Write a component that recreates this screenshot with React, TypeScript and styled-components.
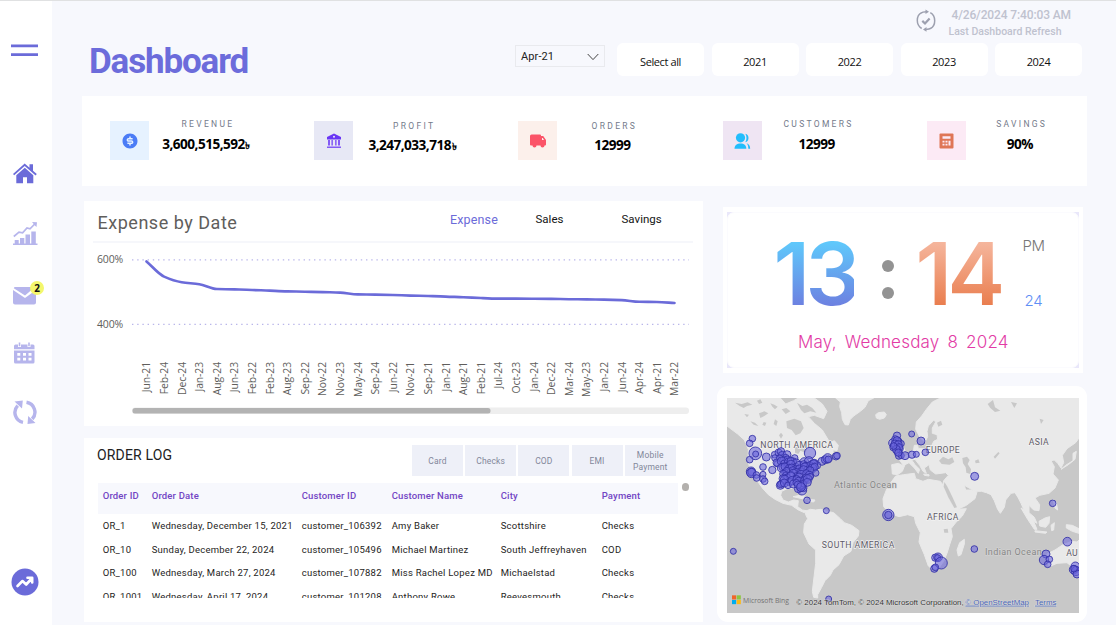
import React from "react";
import styled, { createGlobalStyle, css } from "styled-components";
import { RiMoneyDollarCircleFill } from "react-icons/ri";

const din = '"Roboto", "Liberation Sans", sans-serif';
const segoe = '"Open Sans", "Noto Sans", sans-serif';
const accent = "#6b6bd9";
const soft = "#b6b5ec";

const GlobalStyle = createGlobalStyle`
  *, *::before, *::after { box-sizing: border-box; }
  body { margin: 0; background: #f7f8fd; overflow: hidden; font-family: ${din}; }
  svg { display: block; }
`;

const Page = styled.div`
  display: flex;
  width: 1116px;
  height: 625px;
  overflow: hidden;
  background: #f7f8fd;
  border-top: 1px solid #e0e1e2;
`;

/* ---------- sidebar ---------- */
const Sidebar = styled.nav`
  width: 52px;
  flex: none;
  background: #fff;
  display: flex;
  flex-direction: column;
`;

const NavItem = styled.div<{ $gap: number; $left?: number }>`
  position: relative;
  margin-top: ${(p) => p.$gap}px;
  margin-left: ${(p) => p.$left ?? 13}px;
  width: max-content;
`;

const Badge = styled.span`
  position: absolute;
  left: 17px;
  top: -5px;
  width: 14px;
  height: 14px;
  border-radius: 50%;
  background: #f4f76c;
  font: 700 10px/15px ${segoe};
  color: #111;
  text-align: center;
`;

/* ---------- header ---------- */
const Main = styled.main`
  flex: 1;
  min-width: 0;
  padding-left: 30px;
`;

const Header = styled.header`
  height: 95px;
  width: 1005px;
  display: flex;
  justify-content: space-between;
`;

const Title = styled.h1`
  margin: 39px 0 0 7px;
  font: 700 35px/44px ${din};
  letter-spacing: -1.15px;
  color: #6c6cdb;
`;

const HeaderRight = styled.div`
  display: flex;
  flex-direction: column;
  padding-right: 5px;
`;

const Refresh = styled.div`
  display: flex;
  height: 42px;
  align-self: flex-end;
  padding: 6px 11px 0 0;
`;

const RefreshText = styled.div`
  margin-left: 12px;
  color: #bfc2cf;
  white-space: nowrap;
`;

const RefreshDate = styled.div`
  padding-left: 3px;
  font: 500 12px/17px ${din};
  letter-spacing: -0.12px;
`;

const RefreshNote = styled.div`
  font: 500 10.5px/16px ${din};
  letter-spacing: 0.02px;
`;

const Filters = styled.div`
  display: flex;
  gap: 7.5px;
`;

const Slicer = styled.div`
  width: 90px;
  height: 22px;
  margin: 2px 4.5px 0 0;
  padding: 1px 5px 0;
  border: 1px solid #e9eaee;
  display: flex;
  align-items: center;
  justify-content: space-between;
  font: 400 11px/20px ${din};
  letter-spacing: 0.1px;
  color: #222;
`;

const YearButton = styled.button`
  width: 87px;
  height: 33px;
  border: 0;
  border-radius: 6px;
  background: #fff;
  padding: 5px 0 0;
  font: 400 11px/16px ${segoe};
  letter-spacing: -0.4px;
  color: #111;
`;

/* ---------- KPI strip ---------- */
const KpiBar = styled.section`
  width: 1005px;
  height: 90px;
  padding: 25px 0 0 28px;
  background: #fff;
  display: flex;
`;

const Kpi = styled.div`
  width: 204.2px;
  flex: none;
  display: flex;
`;

const KpiIcon = styled.div<{ $bg: string }>`
  width: 39px;
  height: 39px;
  flex: none;
  background: ${(p) => p.$bg};
  display: flex;
  align-items: center;
  justify-content: center;
`;

const KpiText = styled.div<{ $dx: number; $dy: number }>`
  width: 120px;
  flex: none;
  margin: ${(p) => -5 + p.$dy}px 0 0 ${(p) => p.$dx - 99}px;
  text-align: center;
`;

const KpiLabel = styled.div`
  font: 400 8.5px/17px ${din};
  letter-spacing: 2.3px;
  padding-left: 4px;
  color: #737a8a;
`;

const KpiValue = styled.div<{ $dy: number }>`
  margin-top: ${(p) => -0.5 - p.$dy}px;
  font: 700 13.6px/22px ${segoe};
  letter-spacing: -0.52px;
  color: #000;
  white-space: nowrap;
  small { font-size: 10px; font-weight: 700; line-height: 1; margin-left: 0.5px; }
`;

/* ---------- body columns ---------- */
const Body = styled.div`
  display: flex;
  gap: 14px;
  padding-left: 2px;
`;

const LeftColumn = styled.div`
  width: 619px;
  padding-top: 15px;
  display: flex;
  flex-direction: column;
  gap: 12px;
`;

const RightColumn = styled.div`
  width: 370px;
  padding-top: 21px;
`;

const ChartCard = styled.section`
  height: 225px;
  background: #fff;
`;

const ChartHead = styled.div`
  height: 42px;
  margin: 0 10px 0 9px;
  padding-left: 4.5px;
  border-bottom: 2px solid #f6f7fb;
  display: flex;
`;

const ChartTitle = styled.h2`
  width: 352.5px;
  margin: 10px 0 0;
  font: 400 18px/24px ${din};
  letter-spacing: 0.52px;
  color: #5f5e5c;
`;

const Tab = styled.div<{ $active?: boolean; $w: number }>`
  width: ${(p) => p.$w}px;
  padding-top: 10px;
  font: 400 11.5px/16px ${din};
  letter-spacing: 0.02px;
  color: #141414;
  ${(p) =>
    p.$active &&
    css`
      padding-top: 11px;
      font-size: 12.5px;
      letter-spacing: 0.15px;
      color: ${accent};
    `}
`;

const OrderCard = styled.section`
  height: 184px;
  background: #fff;
  padding: 7px 0 0 14px;
`;

const OrderHead = styled.div`
  display: flex;
  height: 38px;
`;

const OrderTitle = styled.h2`
  width: 315px;
  margin: 0 0 0 -1px;
  font: 400 14px/20px ${din};
  letter-spacing: 0.15px;
  color: #222;
`;

const PayButtons = styled.div`
  display: flex;
  gap: 2.2px;
`;

const PayButton = styled.button`
  width: 51px;
  height: 31px;
  padding: 0 4px;
  border: 0;
  background: #eef0f8;
  font: 400 8.5px/12px ${din};
  letter-spacing: 0.18px;
  color: #82879a;
`;

const TableArea = styled.div`
  display: flex;
  gap: 3.5px;
`;

const Table = styled.div`
  width: 580px;
  height: 114.5px;
  overflow: hidden;
`;

const Row = styled.div<{ $head?: boolean }>`
  display: grid;
  grid-template-columns: 49px 150px 90px 109px 101px 81px;
  height: 23.7px;
  font: 400 9.5px/24px ${din};
  letter-spacing: 0.24px;
  color: #252423;
  white-space: nowrap;
  ${(p) =>
    p.$head &&
    css`
      height: 31px;
      background: #f7f8fd;
      font-weight: 500;
      line-height: 26px;
      letter-spacing: 0.17px;
      color: #7245c4;
    `}
`;

const Cell = styled.div`
  padding-left: 4.7px;
`;

const ScrollDot = styled.div`
  width: 7px;
  height: 8px;
  border-radius: 4px;
  background: #b3b0ad;
`;

/* ---------- clock ---------- */
const ClockCard = styled.section`
  width: 360px;
  height: 166px;
  margin-left: 6px;
  padding: 5px 4px 5px;
  background: #fff;
`;

const ClockBack = styled.div`
  height: 156px;
  background: #e9e7fa;
`;

const ClockFace = styled.div`
  height: 156px;
  border-radius: 7px;
  background: #fff;
  border: 1px solid #fbfbfe;
`;

const TimeRow = styled.div`
  height: 116px;
  display: flex;
  padding-left: 45.5px;
`;

const Digits = styled.div<{ $from: string; $to: string; $w: number }>`
  width: ${(p) => p.$w}px;
  flex: none;
  margin-top: 9px;
  height: 104px;
  font: 600 86.5px/104px "Inter", ${din};
  letter-spacing: -4.5px;
  white-space: nowrap;
  color: transparent;
  background: linear-gradient(${(p) => p.$from} 20%, ${(p) => p.$to} 82%);
  -webkit-background-clip: text;
  background-clip: text;
`;

const Colon = styled.div`
  width: 12px;
  flex: none;
  margin: 47px 22px 0 28px;
  display: flex;
  flex-direction: column;
  gap: 15px;
  i { width: 12px; height: 12px; border-radius: 50%; background: #939393; }
`;

const Meridiem = styled.div`
  margin: 22px 0 0 18.5px;
  font: 300 15px/22px "Inter", ${din};
  letter-spacing: -0.3px;
  color: #777;
  div + div { margin-top: 33px; padding-left: 2px; color: #5f8ff5; }
`;

const DateLine = styled.div`
  margin-left: 70px;
  font: 300 17px/26px "Inter", ${din};
  letter-spacing: 0.2px;
  word-spacing: 3px;
  color: #e23ba5;
  white-space: nowrap;
`;

/* ---------- map ---------- */
const MapCard = styled.section`
  width: 370px;
  height: 236px;
  margin-top: 13px;
  padding: 12px 8px 9px 10px;
  border-radius: 11px;
  background: #fff;
`;

const labels =
  "Jun-21 Feb-24 Dec-24 Jan-23 Aug-24 Jun-23 Feb-22 Feb-23 Aug-23 Sep-22 Nov-22 Nov-23 May-24 Sep-24 Jun-22 Nov-21 Sep-21 Jan-21 Aug-21 Feb-21 Jul-24 Oct-23 Jan-24 Dec-22 Mar-24 May-23 Jan-22 Jun-24 Apr-24 Apr-21 Mar-22".split(" ");
const series = [
  18.8, 34, 39.6, 41.6, 46.4, 46.8, 47.4, 48, 48.8, 49.1, 49.5, 50, 51.8, 52, 52.4, 53, 53.4, 54,
  54.6, 55.4, 56, 56, 56.1, 56.3, 56.6, 56.8, 57, 57.5, 59.2, 59.4, 60.4,
];
const STEP = 17.6;

function linePath() {
  const slope = series.map((_, i) => {
    if (i === 0) return series[1] - series[0];
    if (i === series.length - 1) return series[i] - series[i - 1];
    return Math.min(series[i + 1] - series[i], series[i] - series[i - 1]) * 1.4;
  });
  let d = `M62.5 ${series[0]}`;
  for (let i = 1; i < series.length; i++) {
    const x0 = 62.5 + STEP * (i - 1);
    d += `C${x0 + STEP / 3} ${series[i - 1] + slope[i - 1] / 3} ${x0 + (STEP * 2) / 3} ${
      series[i] - slope[i] / 3
    } ${x0 + STEP} ${series[i]}`;
  }
  return d;
}

const ExpenseChart = () => (
  <svg width="619" height="183" viewBox="0 0 619 183" fontFamily={segoe} fontSize="10.5" fill="#605e5c">
    <text x="13" y="20" letterSpacing="-.15">600%</text>
    <text x="13" y="84.5" letterSpacing="-.15">400%</text>
    <g stroke="#b9b6ea" strokeWidth="1.3" strokeDasharray="1.4 3.8">
      <path d="M48 16.9H605" />
      <path d="M48 81.3H605" />
    </g>
    <path d={linePath()} transform="translate(0 -.4)" fill="none" stroke={accent} strokeWidth="2.6" strokeLinecap="round" />
    {labels.map((l, i) => (
      <text key={l} transform={`translate(${66.3 + STEP * i} 119) rotate(-90)`} textAnchor="end" fontSize="10.4" letterSpacing="-.1">
        {l}
      </text>
    ))}
    <rect x="48" y="164.5" width="557" height="6.5" rx="3" fill="#eee" />
    <rect x="48.500" y="165" width="358" height="5.500" rx="2.500" fill="#b3b3b3" />
  </svg>
);

/* Dots on the map: x, y, r in map units */
const dots: number[][] = [
  [76, 122, 10], [68, 136, 10], [85, 166, 19], [86, 168, 9], [68, 185, 10], [118, 177, 12], [108, 207, 10],
  [72, 221, 14], [74, 222, 11], [73, 225, 14], [88, 231, 10], [89, 240, 10], [108, 229, 9], [108, 243, 10], [113, 250, 10],
  [136, 216, 11], [143, 170, 10], [144, 180, 10], [155, 164, 11], [162, 160, 11], [152, 197, 10], [249, 165, 17],
  [285, 190, 12], [295, 185, 12], [302, 181, 14], [304, 184, 10], [327, 175, 11], [330, 173, 10],
  [240, 307, 10], [298, 338, 9], [484, 351, 17], [484, 351, 11], [19, 460, 9], [305, 603, 9],
  [510, 113, 11], [554, 108, 9], [582, 129, 12], [498, 135, 13], [508, 145, 13], [515, 130, 10], [500, 147, 12],
  [512, 160, 12], [522, 137, 10], [505, 124, 11], [518, 152, 11], [516, 173, 11], [523, 173, 9], [534, 173, 12], [555, 170, 11],
  [510, 128, 12], [504, 138, 12], [514, 140, 12], [516, 148, 11], [508, 154, 12], [500, 144, 10], [514, 164, 11],
  [568, 169, 9], [595, 163, 10], [743, 235, 12], [977, 316, 10], [742, 453, 10], [625, 479, 11], [633, 478, 13],
  [632, 479, 9], [643, 495, 18], [622, 512, 11], [625, 508, 10], [1021, 431, 13], [957, 468, 12], [951, 486, 14],
  [967, 484, 10], [962, 499, 10], [1045, 505, 13], [1040, 515, 13], [1046, 514, 9], [1047, 519, 14], [1050, 528, 12], [1041, 512, 10],
  [160, 262, 12], [165, 256, 11], [225, 277, 14], [221, 267, 14], [214, 272, 12], [229, 270, 11], [222, 266, 9], [203, 180, 10],
  [166, 172, 12], [180, 170, 12], [176, 180, 11], [232, 193, 14], [246, 190, 14], [258, 200, 14], [262, 196, 12], [270, 202, 11],
];
const clusterRows: [number, number, number][] = [
  [160, 196, 186], [150, 214, 194], [168, 272, 202], [163, 270, 211], [172, 264, 220], [166, 256, 230], [170, 248, 239],
  [174, 244, 248], [160, 240, 257], [212, 234, 264],
];
clusterRows.forEach(([from, to, y], r) => {
  for (let x = from, k = 0; x <= to; x += 9 + ((k * 5 + r * 3) % 6), k++) {
    dots.push([x + ((r * 7 + k * 3) % 6) - 2, y + ((k * 7 + r * 5) % 11) - 5, 10 + ((k * 2 + r) % 4)]);
  }
});

const land = [
  "M0 0H160L176 18L200 8L214 0H262L286 18L300 40L290 62L262 52L244 56L262 76L286 96L304 126L318 148L318 166L300 172L309 184L292 190L270 204L256 222L244 240L228 256L234 284L230 298L220 282L208 270L180 272L164 280L161 292L168 306L184 312L200 306L214 308L212 326L226 336L238 338L232 344L214 336L194 322L168 316L144 304L124 290L106 270L96 256L84 240L78 226L70 216L63 190L64 154L52 126L32 108L0 84Z",
  "M300 138L322 128L334 142L330 158L312 154Z",
  "M326 0L340 12L338 26L344 44L346 64L354 80L364 81L370 64L380 54L400 40L414 28L424 8L440 0Z",
  "M446 50L454 44L472 42L478 50L472 60L458 64L448 60Z",
  "M234 340L250 334L266 336L280 334L300 340L320 344L340 362L352 374L374 382L396 398L394 414L378 434L372 460L350 474L336 500L318 516L310 532L294 548L284 568L272 590L272 600L260 598L256 580L260 546L266 496L266 456L246 438L230 404L232 378L242 362L236 350Z",
  "M494 200L514 196L530 204L522 192L516 184L530 178L548 168L560 154L562 142L572 142L574 152L590 152L612 148L620 130L632 124L630 110L616 106L616 90L626 72L620 66L604 84L600 100L602 116L594 132L580 120L566 94L568 72L584 54L598 34L616 12L640 0H1056V120L1046 134L1020 152L1006 172L1010 194L1002 210L992 196L982 186L972 188L982 206L978 228L994 246L984 270L966 286L938 292L924 300L938 320L936 338L920 336L906 322L906 344L922 358L930 376L916 368L900 352L890 334L882 316L874 300L864 284L852 286L836 306L832 328L820 346L812 334L802 308L792 290L778 284L764 280L746 280L730 272L712 262L716 276L736 276L750 282L744 302L718 322L688 336L678 324L668 302L656 278L648 258L650 248L664 232L656 224L626 228L610 216L606 200L592 210L598 226L588 220L578 202L564 184L554 186L564 200L578 214L574 226L562 210L546 194L534 200L526 220L512 230L496 228Z",
  "M505 111L518 112L518 126L528 144L534 158L528 168L508 168L514 156L506 150L512 138L504 126ZM488 128L500 128L500 146L488 150Z",
  "M506 234L530 230L562 226L566 242L588 250L604 244L640 250L650 264L660 288L672 316L688 334L718 332L706 354L686 374L672 392L676 416L668 440L660 466L650 490L636 510L614 512L604 504L592 470L576 432L580 404L566 376L562 356L542 350L516 356L488 346L470 326L468 302L478 276L490 256Z",
  "M712 424L712 438L702 470L694 474L690 456L698 434Z",
  "M960 468L984 456L1008 440L1034 430L1050 432L1056 426V520L1042 512L1020 494L990 496L966 506L962 488Z",
  "M882 330L894 338L918 366L930 394L922 394L902 364ZM936 370L954 360L968 356L966 376L956 388L938 384ZM924 398L960 402L956 406L924 402ZM972 382L982 374L980 396L974 398ZM978 304L988 314L992 336L984 330ZM1018 380L1036 382L1056 392V406L1036 400L1018 390ZM1002 214L1024 200L1044 184L1048 160L1038 166L1038 188L1016 202Z",
  "M198 296L218 292L240 300L236 304L216 300ZM246 304L264 306L260 312L246 310ZM590 228L606 230L606 234L592 232Z",
];
const water = [
  "M178 70L202 62L222 70L230 90L220 106L206 112L194 96L180 90Z",
  "M204 148L224 144L240 150L236 164L220 158L214 168L204 164Z",
  "M636 188L648 176L664 184L676 178L682 192L668 200L644 198Z",
  "M706 180L720 176L728 186L722 198L732 214L730 228L718 224L716 208L708 196Z",
  "M652 252L660 264L676 296L690 328L682 330L664 298L650 266Z",
  "M630 74L642 68L646 80L634 86Z M744 188L754 184L758 194L746 196Z M800 176L814 162L818 166L804 182Z M782 18L798 6L804 28L820 38L804 42L790 30Z M852 12L870 16L862 30Z M938 62L950 66L942 78Z M650 394L662 392L664 404L652 404Z",
  "M24 14L44 18L62 13L76 20L60 24L50 30L38 24ZM96 46L112 40L124 46L112 54L100 60ZM130 16L142 20L152 26L144 34L136 26ZM144 64L152 70L148 84L140 78ZM70 70L84 74L94 84L80 80ZM210 14L226 24L240 20L256 30L268 44L250 40L232 46L222 36ZM90 8L100 4L106 14L96 18ZM110 72L118 74L114 84L106 80ZM52 48L66 50L60 58ZM164 34L178 30L190 40L176 48ZM156 112L162 104L168 112L162 122Z",
];

const WorldMap = () => (
  <svg width="352" height="215" viewBox="0 0 1056 645" preserveAspectRatio="none" fontFamily={din}>
    <rect width="1056" height="645" fill="#c8c8c8" />
    <g fill="#e9e9e9" stroke="#e9e9e9" strokeWidth="3" strokeLinejoin="round">
      {land.map((d) => <path key={d} d={d} />)}
    </g>
    <g fill="#c8c8c8">
      {water.map((d) => <path key={d} d={d} />)}
    </g>
    <g fontSize="26" fill="#5f5b68" stroke="#f2f2f2" strokeWidth="4" paintOrder="stroke" fontWeight="400">
      <text x="100" y="151" textLength="218">NORTH AMERICA</text>
      <text x="284" y="450" textLength="218">SOUTH AMERICA</text>
      <text x="596" y="166" textLength="102">EUROPE</text>
      <text x="905" y="141" textLength="60">ASIA</text>
      <text x="600" y="366" textLength="94">AFRICA</text>
      <text x="1018" y="473">AU</text>
    </g>
    <g fontSize="27" fill="#858585" stroke="#d6d6d6" strokeWidth="3" paintOrder="stroke">
      <text x="321" y="270" textLength="188">Atlantic Ocean</text>
      <text x="774" y="472" textLength="170">Indian Ocean</text>
    </g>
    <g fill="#6a66dc" fillOpacity=".58" stroke="#3330a6" strokeOpacity=".85" strokeWidth="3">
      {dots.map(([x, y, r], i) => <circle key={i} cx={x} cy={y} r={r} />)}
    </g>
    <path fill="#f1652a" d="M15 592h12.500v12.500h-12.500z" />
    <path fill="#8dc63f" d="M29 592h12.500v12.500h-12.500z" />
    <path fill="#00adef" d="M15 606h12.500v12.500h-12.500z" />
    <path fill="#fdb813" d="M29 606h12.500v12.500h-12.500z" />
    <text x="48" y="614" fontSize="22" fill="#737373" textLength="138" fontFamily={segoe} lengthAdjust="spacingAndGlyphs">Microsoft Bing</text>
    <g fontSize="23" fill="#333" stroke="#e0e0e0" strokeWidth="2" paintOrder="stroke" fontFamily={'"Liberation Sans", sans-serif'}>
      <text x="208" y="620" textLength="502" lengthAdjust="spacingAndGlyphs">© 2024 TomTom, © 2024 Microsoft Corporation,</text>
      <g fill="#4763b5">
        <text x="715" y="620" textLength="191" lengthAdjust="spacingAndGlyphs" textDecoration="underline">© OpenStreetMap</text>
        <text x="924" y="620" textLength="64" lengthAdjust="spacingAndGlyphs" textDecoration="underline">Terms</text>
      </g>
    </g>
  </svg>
);

const kpis = [
  { label: "REVENUE", value: "3,600,515,592", taka: true, bg: "#e6f2ff", dx: 96, dy: 0, icon: <RiMoneyDollarCircleFill size={18} color="#4b7cf6" /> },
  {
    label: "PROFIT", value: "3,247,033,718", taka: true, bg: "#e7e8f5", dx: 98, dy: 2,
    icon: (
      <svg width="16" height="16" viewBox="0 0 16 16" fill="#6a36f5">
        <path fillRule="evenodd" d="M8 .5L15 4v2.500H1V4zM8 2.700a1 1 0 100 2 1 1 0 000-2z" />
        <path d="M2 7h2v5.500H2zM5.400 7h1.500v5.500H5.400zM9.100 7h1.500v5.500H9.100zM12 7h2v5.500h-2z" opacity=".8" />
        <path d="M1 13.500h14V15H1z" opacity=".8" />
      </svg>
    ),
  },
  {
    label: "ORDERS", value: "12999", bg: "#fcf0eb", dx: 94, dy: 2,
    icon: (
      <svg width="18" height="16" viewBox="0 0 18 16">
        <path fill="#fb5468" fillRule="evenodd" d="M2.500 1.500H11a1 1 0 011 1V3h2.200L17 7v4.500a1 1 0 01-1 1h-.5a2 2 0 01-4 0H7.500a2 2 0 01-4 0H2a1 1 0 01-1-1V3a1.500 1.500 0 011.500-1.500zM13 5v2h2l-1.200-2z" />
      </svg>
    ),
  },
  {
    label: "CUSTOMERS", value: "12999", bg: "#efe5f3", dx: 94, dy: 0,
    icon: (
      <svg width="18" height="18" viewBox="0 0 18 18" fill="#22bdfc">
        <circle cx="7.500" cy="5.800" r="4.600" />
        <path d="M1.500 16.700c0-3.300 2.500-5.200 6-5.200s5.800 1.900 5.800 5.200z" />
        <path d="M12.300 1.700c4.300 1 4.300 7.500 0 8.500 1.600-2.500 1.600-6 0-8.500zM13.500 11.300c2.500.8 3.700 2.800 3.700 5.400h-1.900c0-2.300-.4-4-1.800-5.400z" />
      </svg>
    ),
  },
  {
    label: "SAVINGS", value: "90%", bg: "#fceaf5", dx: 93, dy: 0,
    icon: (
      <svg width="16" height="16" viewBox="0 0 16 16">
        <rect x="1.500" y=".5" width="14" height="15" rx="1" fill="#df7656" />
        <path fill="#fceaf5" d="M4.500 3.200h8v2.600h-8zM4.500 7.800h2v1.800h-2zM7.500 7.800h2v1.800h-2zM10.500 7.800h2v4.800h-2zM4.500 10.800h2v1.800h-2zM7.500 10.800h2v1.800h-2z" />
      </svg>
    ),
  },
];

const orders = [
  ["OR_1", "Wednesday, December 15, 2021", "customer_106392", "Amy Baker", "Scottshire", "Checks"],
  ["OR_10", "Sunday, December 22, 2024", "customer_105496", "Michael Martinez", "South Jeffreyhaven", "COD"],
  ["OR_100", "Wednesday, March 27, 2024", "customer_107882", "Miss Rachel Lopez MD", "Michaelstad", "Checks"],
  ["OR_1001", "Wednesday, April 17, 2024", "customer_101208", "Anthony Rowe", "Reevesmouth", "Checks"],
];

export default function App() {
  return (
    <>
      <GlobalStyle />
      <Page>
        <Sidebar>
          <NavItem $gap={43} $left={11}>
            <svg width="27" height="13"><path d="M0 1.900h27M0 10.600h27" stroke={accent} strokeWidth="2.800" /></svg>
          </NavItem>
          <NavItem $gap={106}>
            <svg width="24" height="22" viewBox="0 0 24 22" fill={accent}>
              <path d="M11.700.5L16.500 4.700V1.300H20v6.400l3.800 3.400-1.200 1.300L11.700 3 1.200 12.300 0 11z" />
              <path d="M3.300 12.300L11.800 4.800l8.500 7.500V20.200H14v-6h-4v6H3.300z" />
            </svg>
          </NavItem>
          <NavItem $gap={37}>
            <svg width="25" height="24" viewBox="0 0 25 24" fill={soft}>
              <path d="M0 21.500h24.500V23H0zM1.700 18h4v4h-4zM7 16h4.300v6H7zM12.500 12.500H17V22h-4.500zM18.300 9.500h4.500V22h-4.500z" />
              <path d="M.8 14.500L6 10.200l3.600.6L14 6l3 .8L22.300 1.500" fill="none" stroke={soft} strokeWidth="1.700" />
              <path d="M19 .1l5 .2-.5 4.800-1.300-1.400z" />
            </svg>
          </NavItem>
          <NavItem $gap={40}>
            <svg width="24" height="20" viewBox="0 0 24 20" fill={soft}>
              <path d="M1.500 1h20.500L12 9.500.8 2.200zM0 4l12 8L23 4v12.500q0 2-2 2H2q-2 0-2-2z" />
            </svg>
            <Badge>2</Badge>
          </NavItem>
          <NavItem $gap={36} $left={14}>
            <svg width="21" height="22" viewBox="0 0 21 22">
              <path fill={soft} d="M1.500 2.500H4V5h3V2.500h6.500V5h3V2.500h2.500q1.500 0 1.500 1.500v3.200H0V4q0-1.500 1.500-1.500zM0 8.500h20.500V20q0 1.500-1.500 1.500H1.500Q0 21.500 0 20zM4.700.5h1.600v3.700H4.700zM14.200.5h1.600v3.700h-1.600z" />
              <path fill="#fff" d="M3.300 11h3v2.700h-3zM9 11h3v2.700H9zM14.500 11h3v2.700h-3zM3.300 15.800h3v2.700h-3zM9 15.800h3v2.700H9zM14.500 15.800h3v2.700h-3z" />
            </svg>
          </NavItem>
          <NavItem $gap={36}>
            <svg width="24" height="25" viewBox="0 0 24 25" fill="none" stroke={soft} strokeWidth="3.400">
              <path d="M10 22.300A10 10 0 014.700 5.600M13.500 2.300A10 10 0 0119.200 19" />
              <path d="M1.500 1.500L9.800.5 9 8.500zM22.500 23L14.500 24l.7-8z" fill={soft} stroke="none" />
            </svg>
          </NavItem>
          <NavItem $gap={143} $left={11}>
            <svg width="28" height="28" viewBox="0 0 28 28">
              <circle cx="14" cy="14" r="13.500" fill={accent} />
              <path d="M6.500 18l5-5 3.700 3.500 5.500-6M16.500 9.800h4.700v4.700" fill="none" stroke="#fff" strokeWidth="2.600" strokeLinecap="round" strokeLinejoin="round" />
            </svg>
          </NavItem>
        </Sidebar>
        <Main>
          <Header>
            <Title>Dashboard</Title>
            <HeaderRight>
              <Refresh>
                <svg width="20" height="27" viewBox="0 0 20 27" fill="none" stroke="#9da0af" strokeWidth="1.500">
                  <path d="M14.300 5.600C20.300 9 20 18.500 14.500 21.500M5.700 21.500C-.3 18 0 8.600 5.500 5.600M4.500 6.300Q6.500 4.700 10.500 4.700M15.500 20.800Q13.500 22.400 9.500 22.400" />
                  <path d="M9.500 2.400L13 4.700 9.500 7zM10.500 20.100L7 22.400l3.500 2.300z" fill="#9da0af" stroke="none" />
                  <path d="M6.300 13.900l2.700 2.600 4.600-5" strokeWidth="2.200" />
                </svg>
                <RefreshText>
                  <RefreshDate>4/26/2024 7:40:03 AM</RefreshDate>
                  <RefreshNote>Last Dashboard Refresh</RefreshNote>
                </RefreshText>
              </Refresh>
              <Filters>
                <Slicer>
                  Apr-21
                  <svg width="12" height="8" viewBox="0 0 12 8"><path d="M.7 1L6 6.600 11.300 1" fill="none" stroke="#444" /></svg>
                </Slicer>
                {["Select all", "2021", "2022", "2023", "2024"].map((y) => <YearButton key={y}>{y}</YearButton>)}
              </Filters>
            </HeaderRight>
          </Header>
          <KpiBar>
            {kpis.map((k) => (
              <Kpi key={k.label}>
                <KpiIcon $bg={k.bg}>{k.icon}</KpiIcon>
                <KpiText $dx={k.dx} $dy={k.dy}>
                  <KpiLabel>{k.label}</KpiLabel>
                  <KpiValue $dy={k.dy / 2}>{k.value}{k.taka && <small>৳</small>}</KpiValue>
                </KpiText>
              </Kpi>
            ))}
          </KpiBar>
          <Body>
            <LeftColumn>
              <ChartCard>
                <ChartHead>
                  <ChartTitle>Expense by Date</ChartTitle>
                  <Tab $active $w={85.5}>Expense</Tab>
                  <Tab $w={86}>Sales</Tab>
                  <Tab $w={60}>Savings</Tab>
                </ChartHead>
                <ExpenseChart />
              </ChartCard>
              <OrderCard>
                <OrderHead>
                  <OrderTitle>ORDER LOG</OrderTitle>
                  <PayButtons>
                    {["Card", "Checks", "COD", "EMI", "Mobile Payment"].map((p) => <PayButton key={p}>{p}</PayButton>)}
                  </PayButtons>
                </OrderHead>
                <TableArea>
                  <Table>
                    <Row $head>
                      {["Order ID", "Order Date", "Customer ID", "Customer Name", "City", "Payment"].map((h) => <Cell key={h}>{h}</Cell>)}
                    </Row>
                    {orders.map((r) => (
                      <Row key={r[0]}>{r.map((c) => <Cell key={c}>{c}</Cell>)}</Row>
                    ))}
                  </Table>
                  <ScrollDot />
                </TableArea>
              </OrderCard>
            </LeftColumn>
            <RightColumn>
              <ClockCard>
                <ClockBack>
                  <ClockFace>
                    <TimeRow>
                      <Digits $from="#5fc8fb" $to="#6d7fe0" $w={80}>13</Digits>
                      <Colon><i /><i /></Colon>
                      <Digits $from="#f5b59c" $to="#e97c4c" $w={88.5}>14</Digits>
                      <Meridiem><div>PM</div><div>24</div></Meridiem>
                    </TimeRow>
                    <DateLine>May, Wednesday 8 2024</DateLine>
                  </ClockFace>
                </ClockBack>
              </ClockCard>
              <MapCard><WorldMap /></MapCard>
            </RightColumn>
          </Body>
        </Main>
      </Page>
    </>
  );
}
